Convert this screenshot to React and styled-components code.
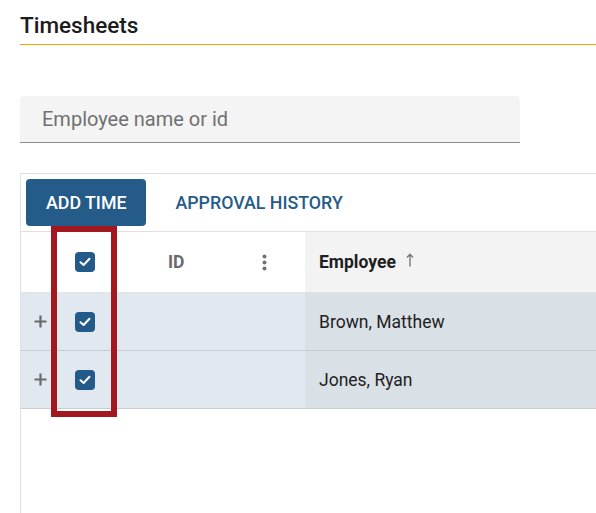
import React from "react";
import styled, { createGlobalStyle } from "styled-components";

const GlobalStyle = createGlobalStyle`
  html, body {
    margin: 0;
    padding: 0;
    background: #ffffff;
    overflow: hidden;
  }
  body {
    font-family: Roboto, "Liberation Sans", sans-serif;
    color: #1f1f1f;
  }
`;

const Page = styled.div`
  width: 640px;
  height: 513px;
  padding-left: 20px;
  display: flex;
  flex-direction: column;
`;

const Title = styled.div`
  padding-top: 11px;
  height: 44px;
  box-sizing: border-box;
  font-size: 22.5px;
  font-weight: 500;
  line-height: 28px;
  color: #1c1c1c;
`;

const Rule = styled.div`
  height: 1px;
  background: #f5a100;
`;

const Search = styled.div`
  margin-top: 51px;
  width: 500px;
  height: 47px;
  box-sizing: border-box;
  background: #f4f4f4;
  border-bottom: 1px solid #8d8d8d;
  border-radius: 4px 4px 0 0;
  padding-left: 22px;
  display: flex;
  align-items: center;
  font-size: 20px;
  color: #707070;
`;

const Grid = styled.div`
  position: relative;
  margin-top: 30px;
  flex: 1;
  border-top: 1px solid #e0e0e0;
  border-left: 1px solid #e0e0e0;
`;

const Toolbar = styled.div`
  height: 58px;
  box-sizing: border-box;
  padding: 5px 5px 0;
  display: flex;
  align-items: flex-start;
  gap: 9px;
  border-bottom: 1px solid #e0e0e0;
`;

const ToolButton = styled.button`
  height: 47px;
  padding: 0 20px;
  border: none;
  border-radius: 4px;
  font-family: inherit;
  font-size: 17.8px;
  font-weight: 500;
  text-transform: uppercase;
  cursor: pointer;
  background: ${({ primary }) => (primary ? "#255b88" : "transparent")};
  color: ${({ primary }) => (primary ? "#ffffff" : "#255b88")};
`;

const Row = styled.div`
  display: grid;
  grid-template-columns: 31px 66px 37px 150px 1fr;
  height: ${({ header }) => (header ? "60px" : "57px")};
  border-bottom: 1px solid ${({ header }) => (header ? "#e2e2e2" : "#c9ced3")};
  background: ${({ header }) => (header ? "#ffffff" : "#e1e8ef")};
`;

const Cell = styled.div`
  display: flex;
  align-items: center;
  justify-content: ${({ center }) => (center ? "center" : "flex-start")};
  font-size: 17.5px;
`;

const PlusCell = styled(Cell)`
  justify-content: center;
  padding-left: 8px;
`;

const IdCell = styled(Cell)`
  justify-content: space-between;
  padding-left: 13px;
  padding-right: 38px;
  color: #6a6a6a;
  font-weight: 700;
`;

const NameCell = styled(Cell)`
  padding-left: 14px;
  background: ${({ header }) => (header ? "#f3f3f3" : "#d9e0e6")};
  font-weight: ${({ header }) => (header ? 700 : 400)};
  color: #1e1e1e;
`;

const SortArrow = styled.svg`
  margin-left: 10px;
  margin-top: -4px;
`;

const Box = styled.span`
  width: 20px;
  height: 20px;
  border-radius: 4px;
  background: #245a89;
  display: flex;
  align-items: center;
  justify-content: center;
`;

const Highlight = styled.div`
  position: absolute;
  left: 30px;
  top: 52px;
  width: 66px;
  height: 191px;
  box-sizing: border-box;
  border: 6px solid #a3171f;
  pointer-events: none;
`;

const Check = () => (
  <Box>
    <svg width="12" height="10" viewBox="0 0 12 10">
      <path d="M1.5 5.2 L4.6 8 L10.5 1.8" fill="none" stroke="#fff" strokeWidth="2" strokeLinecap="round" strokeLinejoin="round" />
    </svg>
  </Box>
);

const Plus = () => (
  <svg width="13" height="13" viewBox="0 0 13 13">
    <path d="M6.5 0.5 V12.5 M0.5 6.5 H12.5" stroke="#6a6a6a" strokeWidth="2.2" />
  </svg>
);

const Dots = () => (
  <svg width="5" height="17" viewBox="0 0 5 17">
    <circle cx="2.5" cy="2.5" r="2" fill="#707070" />
    <circle cx="2.5" cy="8.5" r="2" fill="#707070" />
    <circle cx="2.5" cy="14.5" r="2" fill="#707070" />
  </svg>
);

const employees = ["Brown, Matthew", "Jones, Ryan"];

export default function App() {
  return (
    <Page>
      <GlobalStyle />
      <Title>Timesheets</Title>
      <Rule />
      <Search>Employee name or id</Search>
      <Grid>
        <Toolbar>
          <ToolButton primary>Add time</ToolButton>
          <ToolButton>Approval history</ToolButton>
        </Toolbar>
        <Row header>
          <Cell />
          <Cell center><Check /></Cell>
          <Cell />
          <IdCell>
            ID
            <Dots />
          </IdCell>
          <NameCell header>
            Employee
            <SortArrow width="8" height="14" viewBox="0 0 8 14">
              <path d="M4 13.5 V1.5 M1 4.5 L4 1.2 L7 4.5" fill="none" stroke="#777" strokeWidth="1.4" />
            </SortArrow>
          </NameCell>
        </Row>
        {employees.map((name) => (
          <Row key={name}>
            <PlusCell><Plus /></PlusCell>
            <Cell center><Check /></Cell>
            <Cell />
            <Cell />
            <NameCell>{name}</NameCell>
          </Row>
        ))}
        <Highlight />
      </Grid>
    </Page>
  );
}
